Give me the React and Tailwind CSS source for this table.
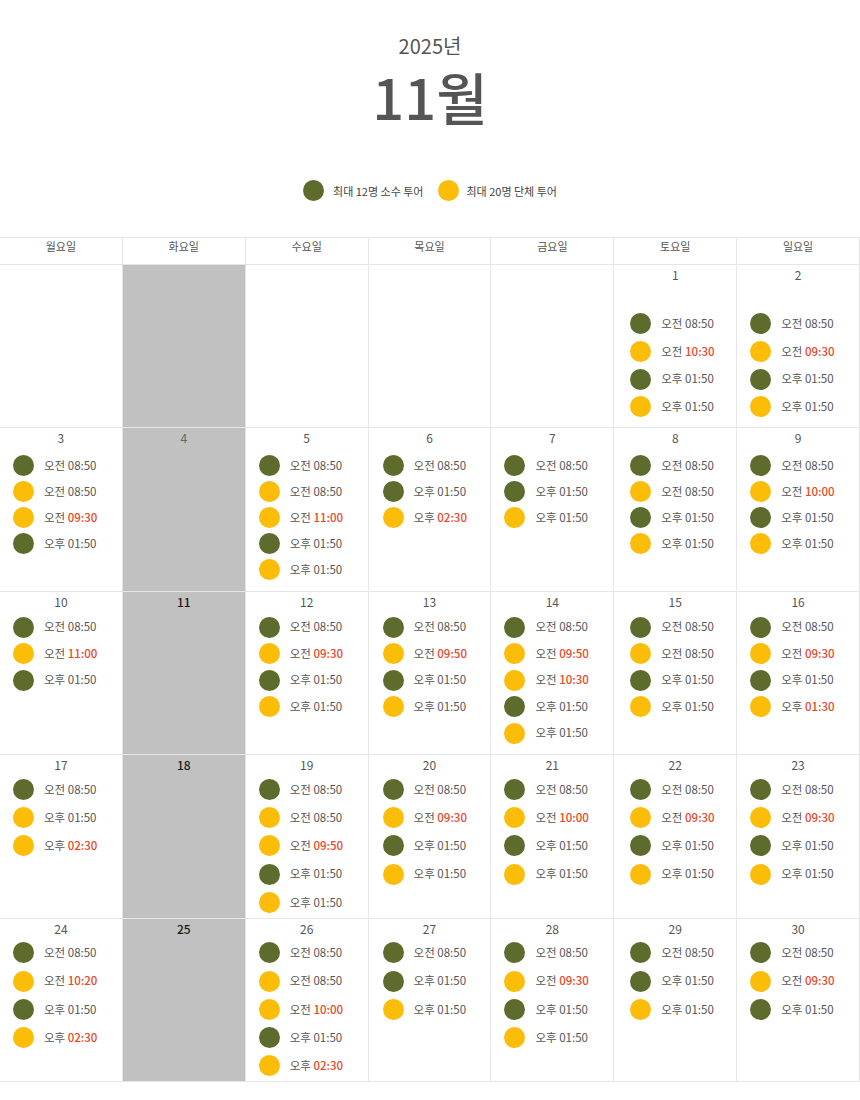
import React from "react";

const FONT = { fontFamily: '"Noto Sans CJK KR", "Noto Sans", sans-serif' };

const DAYS = ["월요일", "화요일", "수요일", "목요일", "금요일", "토요일", "일요일"];

// g = small tour (olive), y = group tour (yellow), * = highlighted time
const WEEKS = [
  {
    itemH: "h-[27.7px]",
    gap: "mt-[28px]",
    cells: [
      null,
      { tue: true },
      null,
      null,
      null,
      { day: 1, items: ["g오전 08:50", "y오전 10:30*", "g오후 01:50", "y오후 01:50"] },
      { day: 2, items: ["g오전 08:50", "y오전 09:30*", "g오후 01:50", "y오후 01:50"] },
    ],
  },
  {
    itemH: "h-[26px]",
    gap: "mt-[7px]",
    cells: [
      { day: 3, items: ["g오전 08:50", "y오전 08:50", "y오전 09:30*", "g오후 01:50"] },
      { day: 4, tue: true, light: true },
      { day: 5, items: ["g오전 08:50", "y오전 08:50", "y오전 11:00*", "g오후 01:50", "y오후 01:50"] },
      { day: 6, items: ["g오전 08:50", "g오후 01:50", "y오후 02:30*"] },
      { day: 7, items: ["g오전 08:50", "g오후 01:50", "y오후 01:50"] },
      { day: 8, items: ["g오전 08:50", "y오전 08:50", "g오후 01:50", "y오후 01:50"] },
      { day: 9, items: ["g오전 08:50", "y오전 10:00*", "g오후 01:50", "y오후 01:50"] },
    ],
  },
  {
    itemH: "h-[26.5px]",
    gap: "mt-[5px]",
    cells: [
      { day: 10, items: ["g오전 08:50", "y오전 11:00*", "g오후 01:50"] },
      { day: 11, tue: true },
      { day: 12, items: ["g오전 08:50", "y오전 09:30*", "g오후 01:50", "y오후 01:50"] },
      { day: 13, items: ["g오전 08:50", "y오전 09:50*", "g오후 01:50", "y오후 01:50"] },
      { day: 14, items: ["g오전 08:50", "y오전 09:50*", "y오전 10:30*", "g오후 01:50", "y오후 01:50"] },
      { day: 15, items: ["g오전 08:50", "y오전 08:50", "g오후 01:50", "y오후 01:50"] },
      { day: 16, items: ["g오전 08:50", "y오전 09:30*", "g오후 01:50", "y오후 01:30*"] },
    ],
  },
  {
    itemH: "h-[28.3px]",
    gap: "mt-[3px]",
    cells: [
      { day: 17, items: ["g오전 08:50", "y오후 01:50", "y오후 02:30*"] },
      { day: 18, tue: true },
      { day: 19, items: ["g오전 08:50", "y오전 08:50", "y오전 09:50*", "g오후 01:50", "y오후 01:50"] },
      { day: 20, items: ["g오전 08:50", "y오전 09:30*", "g오후 01:50", "y오후 01:50"] },
      { day: 21, items: ["g오전 08:50", "y오전 10:00*", "g오후 01:50", "y오후 01:50"] },
      { day: 22, items: ["g오전 08:50", "y오전 09:30*", "g오후 01:50", "y오후 01:50"] },
      { day: 23, items: ["g오전 08:50", "y오전 09:30*", "g오후 01:50", "y오후 01:50"] },
    ],
  },
  {
    itemH: "h-[28.3px]",
    gap: "mt-[3px]",
    cells: [
      { day: 24, items: ["g오전 08:50", "y오전 10:20*", "g오후 01:50", "y오후 02:30*"] },
      { day: 25, tue: true },
      { day: 26, items: ["g오전 08:50", "y오전 08:50", "y오전 10:00*", "g오후 01:50", "y오후 02:30*"] },
      { day: 27, items: ["g오전 08:50", "g오후 01:50", "y오후 01:50"] },
      { day: 28, items: ["g오전 08:50", "y오전 09:30*", "g오후 01:50", "y오후 01:50"] },
      { day: 29, items: ["g오전 08:50", "g오후 01:50", "y오후 01:50"] },
      { day: 30, items: ["g오전 08:50", "y오전 09:30*", "g오후 01:50"] },
    ],
  },
];

const Dot = ({ kind }) => (
  <span
    className={`inline-block h-[21px] w-[21px] shrink-0 rounded-full ${
      kind === "g" ? "bg-[#5d6b2c]" : "bg-[#fbbd08]"
    }`}
  />
);

const Slot = ({ value, itemH }) => {
  const kind = value[0];
  const red = value.endsWith("*");
  const text = value.slice(1).replace("*", "");
  const [period, time] = text.split(" ");
  return (
    <div className={`flex items-center ${itemH}`}>
      <Dot kind={kind} />
      <span className="ml-[10px] text-[11.5px] leading-none text-[#555]">
        {period}{" "}
        <span className={red ? "font-medium text-[#e8472b]" : ""}>{time}</span>
      </span>
    </div>
  );
};

const Cell = ({ cell, week, col }) => {
  const base = "h-full border-b border-r border-[#e6e6e6]";

  if (cell?.tue) {
    return (
      <div className={`${base} bg-[#c1c1c1] pt-[3px]`}>
        {cell.day ? (
          <div
            className={`text-center text-[12px] leading-[14px] ${
              cell.light ? "text-[#666]" : "font-medium text-[#1a1a1a]"
            }`}
          >
            {cell.day}
          </div>
        ) : null}
      </div>
    );
  }

  if (!cell) return <div className={base} />;

  return (
    <div className={`${base} pt-[3px]`}>
      <div className="text-center text-[12px] leading-[14px] text-[#555]">{cell.day}</div>
      <div className={`${week.gap} ${col === 5 ? "pl-[16px]" : col === 3 ? "pl-[14px]" : "pl-[13px]"}`}>
        {cell.items.map((it, i) => (
          <Slot key={i} value={it} itemH={week.itemH} />
        ))}
      </div>
    </div>
  );
};

export default function App() {
  return (
    <div className="w-[860px] bg-white pb-[18px]" style={FONT}>
      <div className="flex flex-col items-center pt-[34px]">
        <div className="text-[20px] leading-[24px] text-[#555]">2025년</div>
        <div className="mt-[8px] text-[56px] font-medium leading-[60px] text-[#555]">11월</div>
      </div>

      <div className="mt-[54px] flex h-[21px] items-center justify-center gap-[14px] text-[11px] leading-[14px] text-[#444]">
        <div className="flex items-center gap-[9px]">
          <Dot kind="g" />
          <span>최대 12명 소수 투어</span>
        </div>
        <div className="flex items-center gap-[8px]">
          <Dot kind="y" />
          <span>최대 20명 단체 투어</span>
        </div>
      </div>

      <div className="mt-[36px] border-t border-[#e6e6e6]">
        <div className="grid h-[27px] grid-cols-7">
          {DAYS.map((d) => (
            <div
              key={d}
              className="border-b border-r border-[#e6e6e6] pt-[1px] text-center text-[11px] leading-[14px] text-[#555]"
            >
              {d}
            </div>
          ))}
        </div>
        {WEEKS.map((week, wi) => (
          <div key={wi} className="grid h-[163.4px] grid-cols-7">
            {week.cells.map((cell, ci) => (
              <Cell key={ci} cell={cell} week={week} col={ci} />
            ))}
          </div>
        ))}
      </div>
    </div>
  );
}
